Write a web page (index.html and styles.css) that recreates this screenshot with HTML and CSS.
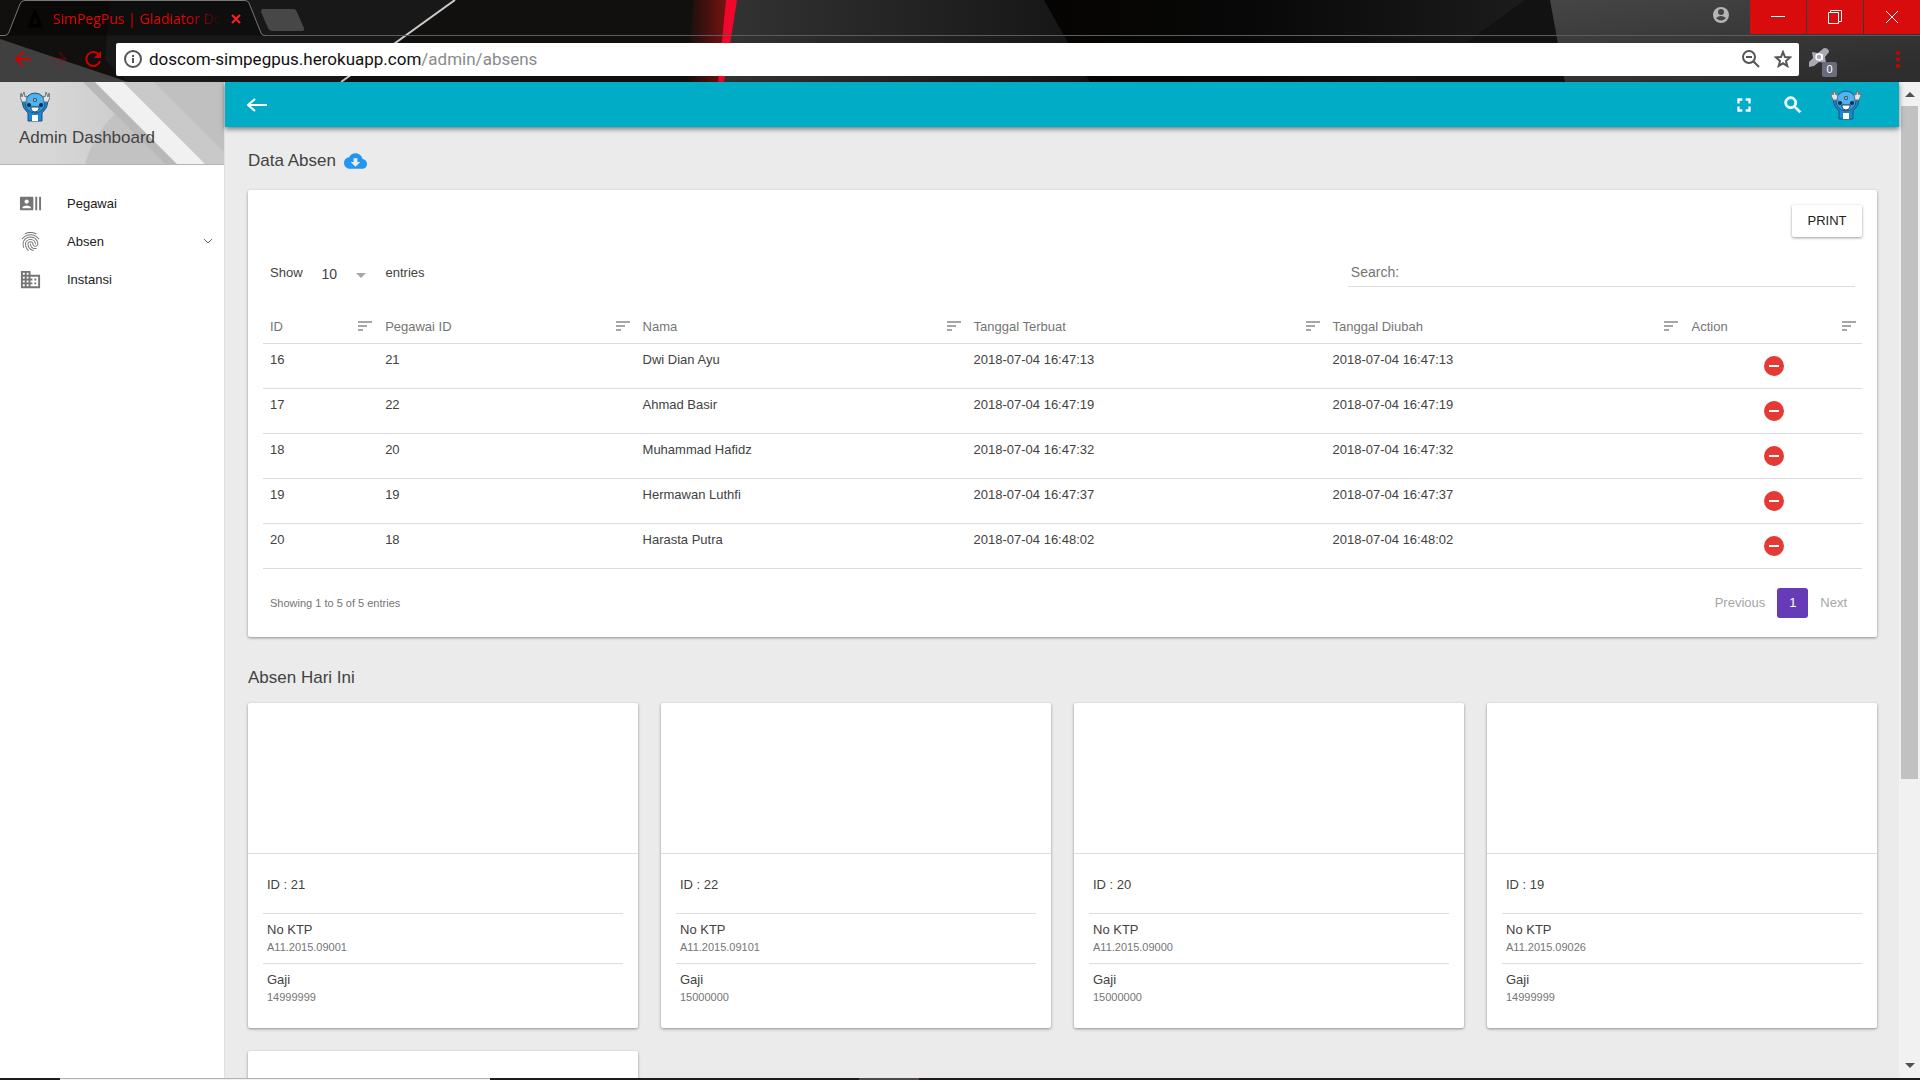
FILE: index.html
```html
<!DOCTYPE html>
<html lang="id">
<head>
  <meta charset="UTF-8" />
  <meta name="viewport" content="width=device-width, initial-scale=1.0" />
  <title>SimPegPus | Gladiator Doscom</title>
  <link rel="stylesheet" href="styles.css">
</head>
<body>
  <!-- shared icons -->
  <svg class="sprite" aria-hidden="true">
    <symbol id="sort" viewBox="0 0 14 11">
      <path d="M0 0h14v2H0zM0 4h9v2H0zM0 8h5v2H0z" fill="#a6a6a6" />
    </symbol>
    <symbol id="remove" viewBox="2 2 20 20">
      <circle cx="12" cy="12" r="10" fill="#e53935" />
      <path d="M7 11h10v2H7z" fill="#fff" />
    </symbol>
    <symbol id="mascot" viewBox="0 0 30 30">
      <path d="M2 9l4-1 4 9h10l4-9 4 1q0 7-6 12v8H8v-8Q2 16 2 9z" fill="#1b86d4" stroke="#24506f" stroke-width="1" />
      <ellipse cx="15" cy="11" rx="10" ry="10" fill="#2b9be6" stroke="#2a5878" stroke-width="1" />
      <ellipse cx="15" cy="8" rx="8" ry="6" fill="#4fb4f0" />
      <path d="M2 10Q-1 6 1 1l1 4L4 0l1 5 2-1-1 6zM28 10q3-4 1-9l-1 4-2-5-1 5-2-1 1 6z" fill="#e2e6e8" stroke="#6b777e" stroke-width="1" />
      <circle cx="15" cy="8" r="2" fill="#345" />
      <circle cx="15" cy="8" r="1" fill="#b7dcf2" />
      <circle cx="9" cy="13" r="2" fill="#16293b" />
      <circle cx="21" cy="13" r="2" fill="#16293b" />
      <path d="M11 15h8v2q-1 3-4 3t-4-3z" fill="#fff" stroke="#26435a" stroke-width="1" />
      <path d="M12 23h6v6h-6z" fill="#fff" />
    </symbol>
  </svg>

  <div class="browser">
    <svg class="theme" viewBox="0 0 1920 82" preserveAspectRatio="xMidYMin slice" aria-hidden="true">
      <defs>
        <linearGradient id="glow"><stop offset="0" stop-color="#7a1010" stop-opacity="0" /><stop offset="1" stop-color="#7a1212" /></linearGradient>
        <linearGradient id="steel"><stop offset="0" stop-color="#333" /><stop offset="1" stop-color="#141414" /></linearGradient>
        <linearGradient id="coal"><stop offset="0" stop-color="#050402" /><stop offset="0.4" stop-color="#080808" /><stop offset="1" stop-color="#1e1e1e" /></linearGradient>
        <linearGradient id="ash" x2="0.6" y2="1"><stop offset="0" stop-color="#454545" /><stop offset="1" stop-color="#2e2e2e" /></linearGradient>
      </defs>
      <rect width="1920" height="82" fill="#11100e" />
      <path d="M110 0H455L342 82H128L105 60z" fill="#181818" />
      <path d="M0 39L128 82H0z" fill="#404040" />
      <path d="M455 0L341 82" stroke="#ccc" stroke-width="2" />
      <path d="M694 0H727L719 82H686z" fill="url(#glow)" />
      <path d="M731 0H1044L1090 82H722z" fill="url(#steel)" />
      <path d="M726 0H737L724 82H718z" fill="#f0082c" />
      <path d="M1044 0H1560V82H1090z" fill="url(#coal)" />
      <path d="M1525 0H1552L1565 82H1412z" fill="#121212" />
      <path d="M1550 0H1920V82H1565z" fill="url(#ash)" />
    </svg>

    <div class="tab-strip">
      <div class="tab">
        <svg class="tab-shape" viewBox="0 0 265 36" aria-hidden="true">
          <path d="M0 35.5H5Q8 35 9 32L20 4Q21 .5 25 .5H245Q248 .5 249 3L261 33Q262 35.5 265 35.5" fill="#0006" stroke="#777" />
        </svg>
        <svg class="favicon" viewBox="0 0 16 16" aria-hidden="true"><path d="M3 15L8 2l5 13M3 14h10" fill="none" stroke="#000" stroke-width="3" /></svg>
        <span class="tab-title">SimPegPus | Gladiator Doscom</span>
        <button class="tab-close" aria-label="Close tab"><svg viewBox="0 0 10 10"><path d="M1 1l8 8M9 1L1 9" stroke="#ff2020" stroke-width="2" /></svg></button>
      </div>
      <div class="strip-rest">
        <button class="new-tab" aria-label="New tab"><svg viewBox="0 0 44 22"><path d="M2 0H32Q35 0 36 3L43 19Q44 22 41 22H12Q8 22 7 19L0 3Q0 0 2 0z" fill="#474747" /></svg></button>
        <button class="account" aria-label="Account"><svg viewBox="0 0 18 18"><circle cx="9" cy="9" r="8" fill="#b5b5b5" /><circle cx="9" cy="6" r="3" fill="#444" /><path d="M4 12q5-4 10 0-5 5-10 0z" fill="#444" /></svg></button>
        <div class="window-buttons">
          <button aria-label="Minimize"><svg viewBox="0 0 14 14"><path d="M0 6.5h14" /></svg></button>
          <button aria-label="Restore"><svg viewBox="0 0 14 14"><path d="M.5 2.5h10v11H.5zM2.5 2.5v-2h11v11h-3" /></svg></button>
          <button aria-label="Close"><svg viewBox="0 0 14 14"><path d="M1 1l12 12M13 1L1 13" /></svg></button>
        </div>
      </div>
    </div>

    <div class="toolbar">
      <button class="nav-button" aria-label="Back"><svg viewBox="0 0 18 18"><path d="M17 9H2M9 2L2 9l7 7" /></svg></button>
      <button class="nav-button dim" aria-label="Forward"><svg viewBox="0 0 18 18"><path d="M1 9h15M9 2l7 7-7 7" /></svg></button>
      <button class="nav-button" aria-label="Reload"><svg viewBox="0 0 18 18"><path d="M15 5A7 7 0 1 0 16 11" /><path d="M17 1v7h-7z" fill="#d00000" stroke="none" /></svg></button>
      <div class="omnibox">
        <svg class="info" viewBox="0 0 18 18" aria-hidden="true"><circle cx="9" cy="9" r="8" fill="none" stroke="#555" stroke-width="2" /><path d="M8 8h2v5H8zM8 5h2v2H8z" fill="#555" /></svg>
        <div class="url">doscom-simpegpus.herokuapp.com<span>/admin/absens</span></div>
        <button aria-label="Zoom"><svg viewBox="0 0 18 18"><circle cx="7" cy="7" r="6" /><path d="M11 11l6 6M4 7h6" /></svg></button>
        <button aria-label="Bookmark"><svg viewBox="0 0 18 18"><path d="M9 2l2 5 5 .4-4 3.600 1.300 5L9 13.300 4.700 16 6 11 2 7.400 7 7z" /></svg></button>
      </div>
      <button class="extension" aria-label="Extension">
        <svg viewBox="0 0 20 20"><path d="M0 19V14l4-4-1-6 6 1 6-5q5 0 5 4l-4 5 1 6-7-1-5 4z" fill="#a9a9b5" /><circle cx="10" cy="9" r="3" fill="none" stroke="#fff" stroke-width="1.500" /><path d="M13 6v6" stroke="#fff" stroke-width="1.500" /></svg>
        <span class="count">0</span>
      </button>
      <button class="menu" aria-label="Menu"><svg viewBox="0 0 4 17"><circle cx="2" cy="2" r="2" /><circle cx="2" cy="8.500" r="2" /><circle cx="2" cy="15" r="2" /></svg></button>
    </div>
  </div>

  <div class="page">
    <aside class="sidebar">
      <div class="profile">
        <svg class="profile-bg" viewBox="0 0 224 82" preserveAspectRatio="none" aria-hidden="true">
          <defs><linearGradient id="fade" x1="0.300" x2="1"><stop offset="0" stop-color="#d7d7d7" /><stop offset="1" stop-color="#c6c6c6" /></linearGradient></defs>
          <rect width="224" height="82" fill="#c9c9c9" />
          <path d="M0 0H83L165 82H0z" fill="url(#fade)" />
          <path d="M115 32Q94 52 85 82H170z" fill="#c2c2c2" />
          <path d="M83 0H95L177 82H165z" fill="#b9b9b9" />
          <path d="M95 0h28l82 82h-28z" fill="#f1f1f1" />
          <path d="M154 0h70v70z" fill="#c0c0c0" />
        </svg>
        <svg class="mascot"><use href="#mascot" /></svg>
        <span class="profile-name">Admin Dashboard</span>
      </div>
      <nav class="menu-list">
        <a href="#">
          <svg viewBox="0 0 24 24"><path d="M21 5v14h2V5h-2zm-4 14h2V5h-2v14zM14 5H2c-.55 0-1 .45-1 1v12c0 .55.45 1 1 1h12c.55 0 1-.45 1-1V6c0-.55-.45-1-1-1zM8 7.750c1.240 0 2.250 1.010 2.250 2.250S9.240 12.250 8 12.250 5.750 11.240 5.750 10 6.760 7.750 8 7.750zM12.500 17h-9v-.75c0-1.500 3-2.250 4.500-2.250s4.500.75 4.500 2.250V17z" /></svg>
          <span>Pegawai</span>
        </a>
        <a href="#">
          <svg viewBox="0 0 24 24"><path d="M17.81 4.47c-.08 0-.16-.02-.23-.06C15.66 3.42 14 3 12.01 3c-1.98 0-3.86.47-5.57 1.41-.24.13-.54.04-.68-.2-.13-.24-.04-.55.2-.68C7.82 2.52 9.86 2 12.01 2c2.13 0 3.99.47 6.03 1.52.25.13.34.43.21.67-.09.18-.26.28-.44.28zM3.5 9.72c-.1 0-.2-.03-.29-.09-.23-.16-.28-.47-.12-.7.99-1.4 2.25-2.5 3.75-3.27C9.98 4.04 14 4.03 17.15 5.65c1.5.77 2.76 1.86 3.75 3.25.16.22.11.54-.12.7-.23.16-.54.11-.7-.12-.9-1.26-2.04-2.25-3.39-2.94-2.87-1.47-6.54-1.47-9.4.01-1.36.7-2.5 1.7-3.4 2.96-.08.14-.23.21-.39.21zm6.25 12.07c-.13 0-.26-.05-.35-.15-.87-.87-1.34-1.43-2.01-2.64-.69-1.23-1.05-2.73-1.05-4.34 0-2.97 2.54-5.39 5.66-5.39s5.66 2.42 5.66 5.39c0 .28-.22.5-.5.5s-.5-.22-.5-.5c0-2.42-2.09-4.39-4.66-4.39-2.57 0-4.66 1.97-4.66 4.39 0 1.44.32 2.77.93 3.85.64 1.15 1.08 1.64 1.85 2.42.19.2.19.51 0 .71-.11.1-.24.15-.37.15zm7.17-1.85c-1.19 0-2.24-.3-3.1-.89-1.49-1.01-2.38-2.65-2.38-4.39 0-.28.22-.5.5-.5s.5.22.5.5c0 1.41.72 2.74 1.94 3.56.71.48 1.54.71 2.54.71.24 0 .64-.03 1.04-.1.27-.05.53.13.58.41.05.27-.13.53-.41.58-.57.11-1.07.12-1.21.12zM14.91 22c-.04 0-.09-.01-.13-.02-1.59-.44-2.63-1.03-3.72-2.1-1.4-1.39-2.17-3.24-2.17-5.22 0-1.62 1.38-2.94 3.08-2.94 1.7 0 3.08 1.32 3.08 2.94 0 1.07.93 1.94 2.08 1.94s2.08-.87 2.08-1.94c0-3.77-3.25-6.83-7.25-6.83-2.84 0-5.44 1.58-6.61 4.03-.39.81-.59 1.76-.59 2.8 0 .78.07 2.01.67 3.61.1.26-.03.55-.29.64-.26.1-.55-.04-.64-.29-.49-1.31-.73-2.61-.73-3.96 0-1.2.23-2.29.68-3.24 1.33-2.79 4.28-4.6 7.51-4.6 4.55 0 8.25 3.51 8.25 7.83 0 1.62-1.38 2.94-3.08 2.94s-3.08-1.32-3.08-2.94c0-1.07-.93-1.94-2.08-1.94s-2.08.87-2.08 1.94c0 1.71.66 3.31 1.87 4.51.95.94 1.86 1.46 3.27 1.85.27.07.42.35.35.61-.05.23-.26.38-.47.38z" /></svg>
          <span>Absen</span>
          <svg class="chevron" viewBox="0 0 10 10"><path d="M1 3l4 4 4-4" /></svg>
        </a>
        <a href="#">
          <svg viewBox="0 0 24 24"><path d="M12 7V3H2v18h20V7H12zM6 19H4v-2h2v2zm0-4H4v-2h2v2zm0-4H4V9h2v2zm0-4H4V5h2v2zm4 12H8v-2h2v2zm0-4H8v-2h2v2zm0-4H8V9h2v2zm0-4H8V5h2v2zm10 12h-8v-2h2v-2h-2v-2h2v-2h-2V9h8v10zm-2-8h-2v2h2v-2zm0 4h-2v2h2v-2z" /></svg>
          <span>Instansi</span>
        </a>
      </nav>
    </aside>

    <div class="main">
      <header class="topbar">
        <button class="go-back" aria-label="Back"><svg viewBox="0 0 20 14"><path d="M20 7H1M8 1L1 7l7 6" /></svg></button>
        <button aria-label="Fullscreen"><svg viewBox="0 0 24 24"><path d="M7 14H5v5h5v-2H7v-3zm-2-4h2V7h3V5H5v5zm12 7h-3v2h5v-5h-2v3zM14 5v2h3v3h2V5h-5z" fill="#fff" stroke="#fff" stroke-width="0.500" /></svg></button>
        <button aria-label="Search"><svg viewBox="0 0 24 24"><path d="M15.500 14h-.79l-.28-.27C15.410 12.590 16 11.110 16 9.500 16 5.910 13.090 3 9.500 3S3 5.910 3 9.500 5.910 16 9.500 16c1.610 0 3.090-.59 4.230-1.570l.27.28v.79l5 4.990L20.490 19l-4.990-5zm-6 0C7.010 14 5 11.990 5 9.500S7.010 5 9.500 5 14 7.010 14 9.500 11.990 14 9.500 14z" fill="#fff" stroke="#fff" /></svg></button>
        <button class="avatar" aria-label="Profile"><svg class="mascot"><use href="#mascot" /></svg></button>
      </header>

      <main class="content">
        <h1>
          Data Absen
          <a href="#" aria-label="Download"><svg viewBox="0 4 24 16"><path d="M19.350 10.040C18.670 6.590 15.640 4 12 4 9.110 4 6.600 5.640 5.350 8.040 2.340 8.360 0 10.910 0 14c0 3.310 2.690 6 6 6h13c2.760 0 5-2.240 5-5 0-2.640-2.050-4.780-4.650-4.960zM17 13l-5 5-5-5h3V9h4v4h3z" fill="#2196f3" /></svg></a>
        </h1>

        <section class="card table-card">
          <div class="actions"><button class="print">PRINT</button></div>

          <div class="controls">
            <div class="length">
              <label for="length">Show</label>
              <div class="select-box">
                <select id="length">
                  <option>10</option>
                  <option>25</option>
                  <option>50</option>
                  <option>100</option>
                </select>
              </div>
              <span>entries</span>
            </div>
            <input type="search" class="search" placeholder="Search:" aria-label="Search" />
          </div>

          <table>
            <colgroup>
              <col class="c-id"><col class="c-pegawai"><col class="c-nama"><col class="c-date"><col class="c-date"><col class="c-action">
            </colgroup>
            <thead>
              <tr>
                <th><div>ID <svg><use href="#sort" /></svg></div></th>
                <th><div>Pegawai ID <svg><use href="#sort" /></svg></div></th>
                <th><div>Nama <svg><use href="#sort" /></svg></div></th>
                <th><div>Tanggal Terbuat <svg><use href="#sort" /></svg></div></th>
                <th><div>Tanggal Diubah <svg><use href="#sort" /></svg></div></th>
                <th><div>Action <svg><use href="#sort" /></svg></div></th>
              </tr>
            </thead>
            <tbody>
              <tr><td>16</td><td>21</td><td>Dwi Dian Ayu</td><td>2018-07-04 16:47:13</td><td>2018-07-04 16:47:13</td><td><button class="remove" aria-label="Hapus 16"><svg><use href="#remove" /></svg></button></td></tr>
              <tr><td>17</td><td>22</td><td>Ahmad Basir</td><td>2018-07-04 16:47:19</td><td>2018-07-04 16:47:19</td><td><button class="remove" aria-label="Hapus 17"><svg><use href="#remove" /></svg></button></td></tr>
              <tr><td>18</td><td>20</td><td>Muhammad Hafidz</td><td>2018-07-04 16:47:32</td><td>2018-07-04 16:47:32</td><td><button class="remove" aria-label="Hapus 18"><svg><use href="#remove" /></svg></button></td></tr>
              <tr><td>19</td><td>19</td><td>Hermawan Luthfi</td><td>2018-07-04 16:47:37</td><td>2018-07-04 16:47:37</td><td><button class="remove" aria-label="Hapus 19"><svg><use href="#remove" /></svg></button></td></tr>
              <tr><td>20</td><td>18</td><td>Harasta Putra</td><td>2018-07-04 16:48:02</td><td>2018-07-04 16:48:02</td><td><button class="remove" aria-label="Hapus 20"><svg><use href="#remove" /></svg></button></td></tr>
            </tbody>
          </table>

          <div class="table-footer">
            <span class="table-info">Showing 1 to 5 of 5 entries</span>
            <div class="pagination">
              <a href="#">Previous</a>
              <a href="#" class="current">1</a>
              <a href="#">Next</a>
            </div>
          </div>
        </section>

        <h2>Absen Hari Ini</h2>
        <section class="people">
          <article class="card">
            <div class="photo"></div>
            <div class="details">
              <div class="row id">ID : 21</div>
              <div class="row">No KTP<small>A11.2015.09001</small></div>
              <div class="row">Gaji<small>14999999</small></div>
            </div>
          </article>
          <article class="card">
            <div class="photo"></div>
            <div class="details">
              <div class="row id">ID : 22</div>
              <div class="row">No KTP<small>A11.2015.09101</small></div>
              <div class="row">Gaji<small>15000000</small></div>
            </div>
          </article>
          <article class="card">
            <div class="photo"></div>
            <div class="details">
              <div class="row id">ID : 20</div>
              <div class="row">No KTP<small>A11.2015.09000</small></div>
              <div class="row">Gaji<small>15000000</small></div>
            </div>
          </article>
          <article class="card">
            <div class="photo"></div>
            <div class="details">
              <div class="row id">ID : 19</div>
              <div class="row">No KTP<small>A11.2015.09026</small></div>
              <div class="row">Gaji<small>14999999</small></div>
            </div>
          </article>
          <article class="card">
            <div class="photo"></div>
          </article>
        </section>
      </main>
    </div>

    <div class="scrollbar" aria-hidden="true">
      <svg viewBox="0 0 10 6"><path d="M0 6l5-5 5 5z" /></svg>
      <div class="track"><div class="thumb"></div></div>
      <svg viewBox="0 0 10 6"><path d="M0 0l5 5 5-5z" /></svg>
    </div>
  </div>

  <div class="taskbar"><span class="app-open"></span><span class="app-hover"></span></div>
</body>
</html>
```

FILE: styles.css
```css
* {
  box-sizing: border-box;
}

body {
  font-family: 'Liberation Sans', Arial, sans-serif;
  font-size: 13px;
  color: #424242;
  margin: 0;
  height: 100vh;
  display: flex;
  flex-direction: column;
  overflow: hidden;
}

button {
  font: inherit;
  border: 0;
  padding: 0;
  background: none;
  display: flex;
  align-items: center;
  justify-content: center;
  cursor: pointer;
}

a {
  color: inherit;
  text-decoration: none;
}

.sprite {
  position: absolute;
  width: 0;
  height: 0;
}

/* browser window */
.browser {
  position: relative;
  flex: none;
  background: #11100e;
}

.theme {
  position: absolute;
  width: 100%;
  height: 100%;
}

.tab-strip,
.toolbar {
  position: relative;
  display: flex;
}

.tab-strip {
  height: 36px;
}

.tab {
  position: relative;
  width: 265px;
  padding: 1px 0 0 26px;
  display: flex;
  align-items: center;
}

.tab-shape {
  position: absolute;
  left: 0;
  top: 0;
  width: 265px;
  height: 36px;
}

.favicon {
  position: relative;
  width: 18px;
  height: 18px;
  margin-right: 9px;
}

.tab-title {
  position: relative;
  width: 169px;
  overflow: hidden;
  white-space: nowrap;
  font-family: 'Open Sans', sans-serif;
  font-size: 14px;
  color: #f00000;
  -webkit-mask-image: linear-gradient(90deg, #000 80%, transparent);
  mask-image: linear-gradient(90deg, #000 80%, transparent);
}

.tab-close {
  position: relative;
  margin-left: 9px;
}

.tab-close svg {
  width: 10px;
  height: 10px;
}

.strip-rest {
  flex: 1;
  display: flex;
  align-items: flex-start;
  border-bottom: 1px solid #5c5c5c;
}

.new-tab {
  margin-left: -4px;
  padding-top: 9px;
}

.new-tab svg {
  width: 44px;
  height: 22px;
}

.account {
  margin-left: auto;
  padding: 6px 20px 0 0;
}

.account svg,
.nav-button svg,
.omnibox svg {
  width: 18px;
  height: 18px;
}

.window-buttons {
  display: flex;
  gap: 1px;
}

.window-buttons button {
  width: 56px;
  height: 34px;
  background: #d80c0c;
}

.window-buttons svg {
  width: 14px;
  height: 14px;
  fill: none;
  stroke: #fff;
}

.toolbar {
  height: 46px;
  align-items: center;
}

.nav-button {
  width: 34px;
}

.nav-button:first-child {
  margin-left: 6px;
}

.nav-button svg {
  fill: none;
  stroke: #d00000;
  stroke-width: 2;
}

.dim {
  margin-left: 2px;
  opacity: 0.25;
}

.omnibox {
  flex: 1;
  height: 33px;
  margin-left: 6px;
  padding: 0 7px 0 8px;
  display: flex;
  align-items: center;
  background: #fff;
  border-radius: 2px;
}

.omnibox button {
  margin-left: 14px;
}

.omnibox button svg {
  fill: none;
  stroke: #555;
  stroke-width: 2;
}

.url {
  flex: 1;
  margin-left: 7px;
  font-family: Roboto, sans-serif;
  font-size: 17px;
  color: #111;
}

.url span {
  color: #8a8a8a;
}

.extension {
  position: relative;
  width: 30px;
  height: 30px;
  margin-left: 10px;
  align-items: flex-start;
  justify-content: flex-start;
}

.extension svg {
  width: 20px;
  height: 20px;
  margin-top: 4px;
}

.count {
  position: absolute;
  right: 2px;
  bottom: -3px;
  width: 15px;
  height: 15px;
  border-radius: 2px;
  background: #6b6b7b;
  color: #fff;
  font-size: 11px;
  line-height: 15px;
}

.menu {
  margin: 0 20px 0 57px;
}

.menu svg {
  width: 4px;
  height: 17px;
  fill: #d00000;
}

/* page frame */
.page {
  flex: 1;
  min-height: 0;
  display: flex;
  background: #ebebeb;
}

.sidebar {
  width: 225px;
  flex: none;
  background: #fff;
  border-right: 1px solid #e0e0e0;
}

.profile {
  position: relative;
  height: 83px;
  padding: 10px 16px 0;
  border-bottom: 1px solid #b5b5b5;
}

.profile-bg {
  position: absolute;
  left: 0;
  top: 0;
  width: 100%;
  height: 100%;
}

.mascot {
  position: relative;
  display: block;
  width: 30px;
  height: 30px;
}

.profile .mascot {
  margin-left: 4px;
}

.profile-name {
  position: relative;
  display: block;
  margin-left: 3px;
  font-size: 17px;
  line-height: 32px;
}

.menu-list {
  padding-top: 19px;
}

.menu-list a {
  display: flex;
  align-items: center;
  height: 38px;
  padding: 0 11px 0 19px;
  color: #212121;
}

.menu-list svg {
  width: 23px;
  height: 23px;
  fill: #757575;
}

.menu-list span {
  margin-left: 25px;
}

.menu-list .chevron {
  width: 10px;
  height: 10px;
  margin-left: auto;
  fill: none;
  stroke: #616161;
  stroke-width: 1;
}

.main {
  flex: 1;
  min-width: 0;
  display: flex;
  flex-direction: column;
}

.topbar {
  position: relative;
  flex: none;
  height: 45px;
  padding: 0 38px 0 22px;
  display: flex;
  align-items: center;
  gap: 27px;
  background: #00acc6;
  box-shadow: 0 2px 5px rgba(0, 0, 0, 0.5);
}

.topbar svg {
  width: 22px;
  height: 22px;
}

.topbar .go-back {
  margin-right: auto;
}

.topbar .go-back svg {
  width: 20px;
  height: 14px;
  fill: none;
  stroke: #fff;
  stroke-width: 2;
}

.topbar .mascot {
  width: 30px;
  height: 30px;
}

.content {
  flex: 1;
  min-height: 0;
  padding: 22px 22px 0 23px;
  overflow: hidden;
}

h1,
h2 {
  margin: 0;
  font-size: 17px;
  font-weight: normal;
  line-height: 24px;
}

h1 {
  display: flex;
  align-items: center;
  gap: 8px;
  margin-bottom: 17px;
}

h1 a {
  display: flex;
}

h1 svg {
  width: 23px;
  height: 16px;
}

h2 {
  margin: 29px 0 13px;
}

.card {
  background: #fff;
  border-radius: 2px;
  box-shadow: 0 1px 3px rgba(0, 0, 0, 0.4);
}

.table-card {
  padding: 15px;
}

.actions {
  display: flex;
  justify-content: flex-end;
}

.print {
  width: 70px;
  height: 32px;
  padding-bottom: 2px;
  border-radius: 2px;
  background: #fff;
  color: #212121;
  box-shadow: 0 1px 3px rgba(0, 0, 0, 0.4);
}

.controls {
  display: flex;
  justify-content: space-between;
  margin-top: 21px;
  padding: 0 7px;
}

.length {
  display: flex;
  align-items: center;
}

.select-box {
  position: relative;
  width: 48px;
  margin: 2px 18px 0 17px;
}

.select-box::after {
  content: '';
  position: absolute;
  right: 2px;
  top: 11px;
  border: 5px solid transparent;
  border-top-color: #a6a6a6;
  pointer-events: none;
}

select {
  appearance: none;
  width: 100%;
  height: 24px;
  padding: 0 2px;
  border: 0;
  background: none;
  font: inherit;
  font-size: 14px;
  color: #424242;
}

.search {
  width: 32%;
  height: 29px;
  padding: 0 3px;
  border: 0;
  border-bottom: 1px solid #dcdcdc;
  background: none;
  font: inherit;
  font-size: 14px;
}

.search::placeholder {
  color: #757575;
}

table {
  width: 100%;
  margin-top: 21px;
  table-layout: fixed;
  border-collapse: collapse;
}

.c-id { width: 7.200%; }
.c-pegawai { width: 16.100%; }
.c-nama { width: 20.700%; }
.c-date { width: 22.450%; }
.c-action { width: 11.100%; }

th,
td {
  padding: 0 6px 0 7px;
  border-bottom: 1px solid #dcdcdc;
  text-align: left;
  font-weight: normal;
}

th {
  height: 35px;
  padding-top: 3px;
  color: #757575;
}

th div {
  display: flex;
  align-items: center;
  justify-content: space-between;
}

th svg {
  width: 14px;
  height: 11px;
}

td {
  height: 45px;
  padding-top: 8px;
  vertical-align: top;
}

.remove {
  margin: 4px auto 0;
}

.remove svg {
  width: 20px;
  height: 20px;
}

.table-footer {
  display: flex;
  align-items: center;
  justify-content: space-between;
  margin: 19px 0 4px;
  padding: 0 7px;
}

.table-info {
  font-size: 11px;
  color: #757575;
}

.pagination {
  display: flex;
  margin-right: 8px;
  gap: 12px;
  line-height: 30px;
  color: #a6a6a6;
}

.pagination .current {
  width: 31px;
  border-radius: 3px;
  background: #673ab7;
  color: #fff;
  text-align: center;
}

.people {
  display: grid;
  grid-template-columns: repeat(4, 1fr);
  gap: 23px;
}

.photo {
  height: 151px;
  border-bottom: 1px solid #dcdcdc;
}

.details {
  padding: 0 15px 14px;
}

.row {
  height: 50px;
  padding: 8px 4px 0;
  border-bottom: 1px solid #dcdcdc;
  line-height: 16px;
}

.row.id {
  height: 60px;
  padding-top: 23px;
}

.row:last-child {
  border-bottom: 0;
}

.row small {
  display: block;
  margin-top: 1px;
  font-size: 11px;
  color: #757575;
}

.scrollbar {
  width: 21px;
  flex: none;
  display: flex;
  flex-direction: column;
  align-items: center;
  background: #f1f1f1;
}

.scrollbar svg {
  width: 10px;
  height: 6px;
  margin: 9px 0;
  fill: #505050;
}

.track {
  flex: 1;
  width: 17px;
}

.thumb {
  height: 71%;
  background: #c1c1c1;
}

.taskbar {
  flex: none;
  display: flex;
  height: 2px;
  background: #1f1b1c;
}

.app-open {
  width: 430px;
  margin-left: 60px;
  border-top: 1px solid #b5b5b5;
  background: #f0f0f0;
}

.app-hover {
  width: 60px;
  margin-left: 369px;
  background: #4a4a4a;
}
```
